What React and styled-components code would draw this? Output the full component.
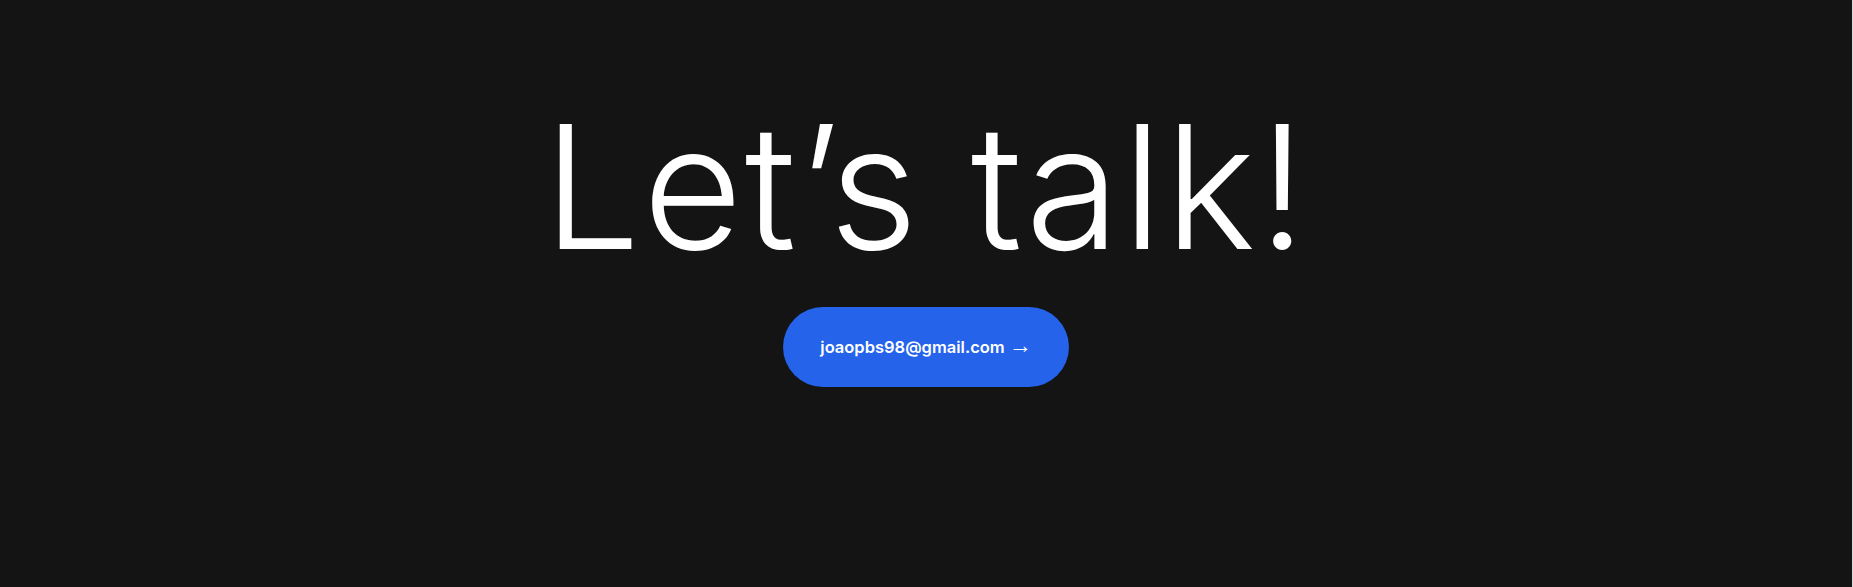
import React from "react";
import styled, { createGlobalStyle } from "styled-components";

const Global = createGlobalStyle`
  html, body { margin: 0; padding: 0; background: #141414; }
  body { font-family: Inter, "Liberation Sans", sans-serif; }
`;

const Page = styled.main`
  box-sizing: border-box;
  height: 587px;
  background: #141414;
  border-right: 1px solid #d8d8d8;
  display: flex;
  flex-direction: column;
  align-items: center;
  padding-top: 94px;
`;

const Title = styled.h1`
  margin: 0;
  font-family: Inter, "Liberation Sans", sans-serif;
  font-weight: 350;
  font-size: 172px;
  line-height: 184px;
  letter-spacing: 2.3px;
  color: #ffffff;
`;

const MailButton = styled.a`
  margin-top: 29px;
  box-sizing: border-box;
  width: 286px;
  height: 80px;
  border-radius: 40px;
  background: #2563eb;
  color: #ffffff;
  display: flex;
  align-items: center;
  justify-content: center;
  gap: 4px;
  font-family: Inter, "Liberation Sans", sans-serif;
  font-weight: 600;
  font-size: 16.5px;
  text-decoration: none;
`;

const Arrow = styled.span`
  font-family: "Liberation Sans", sans-serif;
  font-weight: 400;
  font-size: 23px;
  line-height: 1;
  margin-bottom: 4px;
`;

export default function App() {
  return (
    <>
      <Global />
      <Page>
        <Title>Let’s talk!</Title>
        <MailButton href="mailto:joaopbs98@gmail.com">
          joaopbs98@gmail.com<Arrow>→</Arrow>
        </MailButton>
      </Page>
    </>
  );
}
